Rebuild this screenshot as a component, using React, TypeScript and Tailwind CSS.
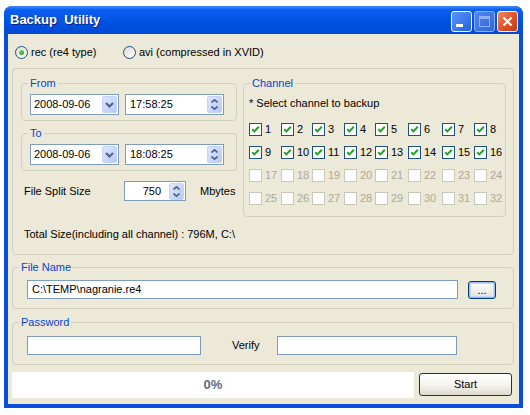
import React from 'react';

const font = "font-['Liberation_Sans',Arial,sans-serif]";

function Tick() {
  return (
    <svg width="9" height="9" viewBox="0 0 9 9">
      <path d="M1.2 4.2 L3.4 6.4 L7.8 1.8" stroke="#21a121" strokeWidth="2" fill="none" />
    </svg>
  );
}

function Radio({ on, label }: { on: boolean; label: string }) {
  return (
    <div className="flex items-center gap-[3px]">
      <div className="flex h-[13px] w-[13px] items-center justify-center rounded-full border border-[#1c5180] bg-gradient-to-br from-[#dcdcd4] to-white">
        {on && <div className="h-[5px] w-[5px] rounded-full bg-gradient-to-br from-[#6ce46a] to-[#1f9b1f]" />}
      </div>
      <span>{label}</span>
    </div>
  );
}

function DropButton() {
  return (
    <div className="mr-[1px] ml-auto flex h-[17px] w-[15px] items-center justify-center rounded-[2px] border border-[#c3d3fd] bg-gradient-to-br from-[#dfe8fe] to-[#b5c8f7]">
      <svg width="9" height="6" viewBox="0 0 9 6">
        <path d="M1 1 L4.5 4.5 L8 1" stroke="#4d6185" strokeWidth="2" fill="none" />
      </svg>
    </div>
  );
}

function SpinButton() {
  return (
    <div className="mr-[1px] ml-auto flex h-[17px] w-[15px] flex-col items-center justify-center gap-[3px] rounded-[2px] border border-[#c3d3fd] bg-gradient-to-br from-[#dfe8fe] to-[#b5c8f7]">
      <svg width="7" height="4" viewBox="0 0 7 4">
        <path d="M0.5 3.5 L3.5 0.8 L6.5 3.5" stroke="#4d6185" strokeWidth="1.6" fill="none" />
      </svg>
      <svg width="7" height="4" viewBox="0 0 7 4">
        <path d="M0.5 0.5 L3.5 3.2 L6.5 0.5" stroke="#4d6185" strokeWidth="1.6" fill="none" />
      </svg>
    </div>
  );
}

function Group({
  label,
  className,
  inner,
  children,
}: {
  label: string;
  className?: string;
  inner?: string;
  children: React.ReactNode;
}) {
  return (
    <fieldset className={`rounded-[4px] border border-[#d0d0bf] ${className ?? ''}`}>
      <legend className="ml-[6px] px-[2px] leading-[13px] text-[#0046d5]">{label}</legend>
      <div className={inner}>{children}</div>
    </fieldset>
  );
}

function DateTime({ label, date, time, className }: { label: string; date: string; time: string; className?: string }) {
  return (
    <Group label={label} className={className} inner="px-[8px] pb-[5px]">
      <div className="mt-[4px] flex gap-[6px]">
        <div className="flex h-[21px] w-[89px] items-center border border-[#7f9db9] bg-white pl-[3px]">
          <span>{date}</span>
          <DropButton />
        </div>
        <div className="flex h-[21px] w-[99px] items-center border border-[#7f9db9] bg-white pl-[4px]">
          <span>{time}</span>
          <SpinButton />
        </div>
      </div>
    </Group>
  );
}

function Channel({ n }: { n: number }) {
  const on = n <= 16;
  return (
    <div className="flex h-[13px] items-center gap-[3px]">
      <div
        className={`flex h-[13px] w-[13px] items-center justify-center border bg-white ${
          on ? 'border-[#1c5180]' : 'border-[#cac8bb]'
        }`}
      >
        {on && <Tick />}
      </div>
      <span className={`leading-[13px] ${on ? 'text-black' : 'text-[#aca899]'}`}>{n}</span>
    </div>
  );
}

function TitleButton({ kind }: { kind: 'min' | 'max' | 'close' }) {
  if (kind === 'close') {
    return (
      <div className="flex h-[21px] w-[21px] items-center justify-center rounded-[3px] border border-white bg-gradient-to-br from-[#f08a66] via-[#e1542a] to-[#c23a12]">
        <svg width="11" height="11" viewBox="0 0 11 11">
          <path d="M1.5 1.5 L9.5 9.5 M9.5 1.5 L1.5 9.5" stroke="white" strokeWidth="2.2" />
        </svg>
      </div>
    );
  }
  if (kind === 'max') {
    return (
      <div className="flex h-[21px] w-[21px] items-center justify-center rounded-[3px] border border-[#8fb0f4] bg-gradient-to-br from-[#4f86f0] to-[#3266dc]">
        <div className="h-[11px] w-[11px] border border-t-[3px] border-[#8fb0f4]" />
      </div>
    );
  }
  return (
    <div className="flex h-[21px] w-[21px] items-end rounded-[3px] border border-white bg-gradient-to-br from-[#5b95f8] to-[#2360e0] pb-[4px] pl-[4px]">
      <div className="h-[3px] w-[7px] bg-white" />
    </div>
  );
}

export default function App() {
  const channels = Array.from({ length: 32 }, (_, i) => i + 1);

  return (
    <div className={`h-[415px] w-[530px] bg-white pt-[6px] pl-[4px] text-[11px] text-black ${font}`}>
      <div className="flex w-[519px] flex-col rounded-t-[8px] bg-[#0a4fdc]">
        {/* Title bar */}
        <div className="flex h-[28px] items-start rounded-t-[8px] bg-[linear-gradient(180deg,#3d8cf8_0%,#0a5df0_14%,#0054e3_55%,#0048d6_100%)] pr-[5px] pl-[6px]">
          <span className="mt-[6px] text-[13px] leading-[16px] font-bold whitespace-pre text-white [text-shadow:1px_1px_0_#0b2480]">
            Backup  Utility
          </span>
          <div className="mt-[5px] ml-auto flex gap-[2px]">
            <TitleButton kind="min" />
            <TitleButton kind="max" />
            <TitleButton kind="close" />
          </div>
        </div>

        {/* Body */}
        <div className="mx-[4px] mb-[4px] h-[370px] bg-[#ece9d8]">
          <div className="box-content flex h-[13px] items-center pt-[12px] pl-[7px] leading-[13px]">
            <div className="w-[108px]">
              <Radio on label="rec (re4 type)" />
            </div>
            <Radio on={false} label="avi (compressed in XVID)" />
          </div>

          <div className="mt-[9px] ml-[4px] flex h-[187px] w-[502px] rounded-[4px] border border-[#d0d0bf] pt-[8px] pl-[8px]">
            <div className="flex w-[216px] flex-col">
              <DateTime label="From" date="2008-09-06" time="17:58:25" />
              <DateTime label="To" date="2008-09-06" time="18:08:25" className="mt-[6px]" />

              <div className="mt-[10px] ml-[3px] flex h-[20px] items-center">
                <span className="w-[100px]">File Split Size</span>
                <div className="flex h-[20px] w-[62px] items-center border border-[#7f9db9] bg-white">
                  <span className="w-[36px] text-right">750</span>
                  <SpinButton />
                </div>
                <span className="ml-[14px]">Mbytes</span>
              </div>

              <div className="mt-[27px] ml-[3px] leading-[13px]">Total Size(including all channel) : 796M, C:\</div>
            </div>

            <Group label="Channel" className="ml-[6px] h-[140px] w-[263px]" inner="pl-[5px]">
              <div className="mt-[7px] leading-[13px]">* Select channel to backup</div>
              <div className="mt-[13px] grid grid-cols-[32px_31px_32px_31px_33px_34px_32px_30px] gap-y-[10px]">
                {channels.map((n) => (
                  <Channel key={n} n={n} />
                ))}
              </div>
            </Group>
          </div>

          <Group label="File Name" className="mt-[6px] ml-[4px] w-[502px]" inner="pb-[9px] pl-[14px]">
            <div className="mt-[6px] flex items-center">
              <div className="flex h-[19px] w-[431px] items-center border border-[#7f9db9] bg-white pl-[4px]">
                C:\TEMP\nagranie.re4
              </div>
              <div className="ml-[10px] flex h-[18px] w-[28px] items-center justify-center rounded-[3px] border border-[#003c74] bg-gradient-to-b from-white to-[#e3e2da] leading-[10px] shadow-[inset_0_0_0_1px_#9ebcf0,inset_0_0_0_2px_#c5d6f6]">
                ...
              </div>
            </div>
          </Group>

          <Group label="Password" className="mt-[7px] ml-[4px] w-[502px]" inner="pb-[9px] pl-[14px]">
            <div className="mt-[7px] flex items-center">
              <div className="h-[19px] w-[174px] border border-[#7f9db9] bg-white" />
              <span className="w-[76px] pl-[31px]">Verify</span>
              <div className="h-[19px] w-[180px] border border-[#7f9db9] bg-white" />
            </div>
          </Group>

          <div className="mt-[7px] ml-[4px] flex items-start">
            <div className="flex h-[26px] w-[402px] items-center justify-center bg-white text-[13px] font-bold text-[#5c6c80]">
              0%
            </div>
            <div className="mt-[1px] ml-[5px] flex h-[23px] w-[93px] items-center justify-center rounded-[3px] border border-[#003c74] bg-gradient-to-b from-white via-[#f6f5f0] to-[#dcd9cd]">
              Start
            </div>
          </div>
        </div>
      </div>
    </div>
  );
}
